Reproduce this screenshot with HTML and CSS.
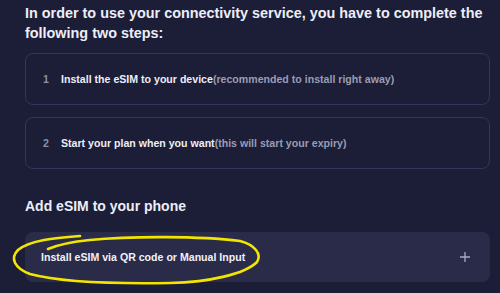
FILE: index.html
```html
<!DOCTYPE html>
<html>
<head>
<meta charset="utf-8">
<link rel="stylesheet" href="styles.css">
</head>
<body>
<main class="page">
  <h1 class="intro">In order to use your connectivity service, you have to complete the following two steps:</h1>
  <ol class="steps">
    <li class="step"><span class="num">1</span><span class="label">Install the eSIM to your device</span><span class="hint">(recommended to install right away)</span></li>
    <li class="step"><span class="num">2</span><span class="label">Start your plan when you want</span><span class="hint">(this will start your expiry)</span></li>
  </ol>
  <h2 class="section">Add eSIM to your phone</h2>
  <div class="accordion">
    <span class="acc-title">Install eSIM via QR code or Manual Input</span>
    <svg class="plus" width="12" height="12" viewBox="0 0 12 12"><path d="M6 1v10M1 6h10" stroke="#a9abc4" stroke-width="1.3" fill="none"/></svg>
    <svg class="scribble" width="270" height="62" viewBox="0 0 270 62"><path d="M80 11 C55 13 30 15 18 25 C10 33 14 43 30 49 C60 57 110 59 170 58 C210 57 245 49 257 37 C262 29 255 20 240 16 C200 11 130 11 90 15 C70 17 55 21 48 24" stroke="#f2e600" stroke-width="2.6" fill="none" stroke-linecap="round"/></svg>
  </div>
</main>
</body>
</html>
```
FILE: styles.css
```css
html, body {
  margin: 0;
  padding: 0;
  background: #1c1d36;
}
body {
  font-family: "Liberation Sans", Arial, sans-serif;
  color: #eceef8;
  width: 500px;
  height: 293px;
  overflow: hidden;
}
.page {
  padding: 3px 10px 0 25px;
}
.intro {
  margin: 0;
  font-size: 14.4px;
  font-weight: 700;
  line-height: 20px;
}
.steps {
  list-style: none;
  margin: 10px 0 0;
  padding: 0;
  display: flex;
  flex-direction: column;
  gap: 12px;
}
.step {
  height: 50px;
  border: 1px solid #33355a;
  border-radius: 8px;
  display: flex;
  align-items: center;
  padding-left: 17px;
  font-size: 10.6px;
  font-weight: 700;
}
.num {
  color: #8d8fa8;
  width: 18px;
}
.label { color: #eceef8; }
.hint { color: #9a9cb3; }
.section {
  margin: 28px 0 0;
  font-size: 14px;
  font-weight: 700;
  line-height: 18px;
}
.accordion {
  position: relative;
  margin-top: 17px;
  height: 50px;
  background: #2a2b48;
  border-radius: 8px;
  display: flex;
  align-items: center;
  justify-content: space-between;
  padding: 0 19px 0 16px;
  font-size: 10.6px;
  font-weight: 700;
}
.acc-title { color: #f0f1fa; }
.plus { display: block; }
.scribble {
  position: absolute;
  left: -25px;
  top: -7px;
  pointer-events: none;
}
```
